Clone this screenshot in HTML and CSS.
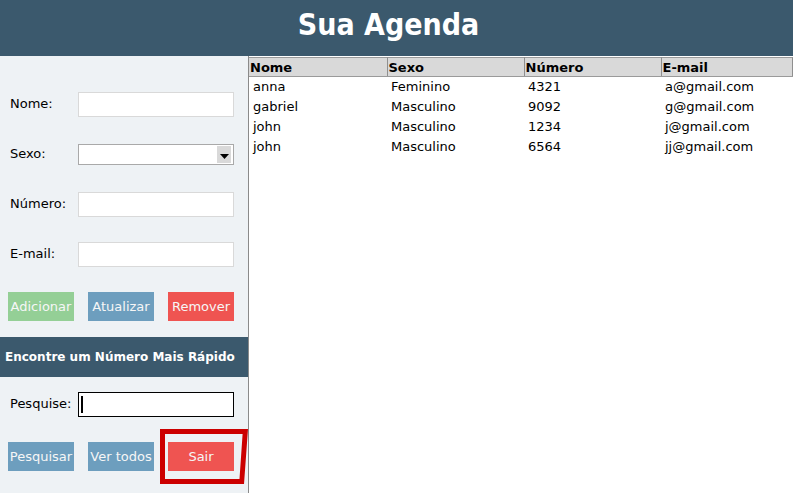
FILE: index.html
```html
<!DOCTYPE html>
<html lang="pt">
<head>
<meta charset="utf-8">
<title>Sua Agenda</title>
<link rel="stylesheet" href="styles.css">
</head>
<body>
<header class="topbar"><h1 class="title">Sua Agenda</h1></header>
<div class="main">
  <aside class="panel">
    <div class="form">
      <div class="row"><label class="lbl">Nome:</label><div class="field"></div></div>
      <div class="row"><label class="lbl">Sexo:</label><div class="select"><span class="arrow"><svg width="9" height="6" viewBox="0 0 9 6"><path d="M0 0H9L4.5 5Z" fill="#000"/></svg></span></div></div>
      <div class="row"><label class="lbl">Número:</label><div class="field"></div></div>
      <div class="row"><label class="lbl">E-mail:</label><div class="field"></div></div>
      <div class="btns">
        <button class="btn green">Adicionar</button>
        <button class="btn blue">Atualizar</button>
        <button class="btn red">Remover</button>
      </div>
    </div>
    <div class="section">Encontre um Número Mais Rápido</div>
    <div class="form search">
      <div class="row"><label class="lbl">Pesquise:</label><div class="field dark"><span class="caret"></span></div></div>
      <div class="btns">
        <button class="btn blue">Pesquisar</button>
        <button class="btn blue">Ver todos</button>
        <span class="sairwrap"><button class="btn red">Sair</button>
          <svg class="mark" width="92" height="60" viewBox="0 0 92 60"><path d="M2 2H90L86 57H2Z M7 7V52H81.5L84.6 7Z" fill="#cc0000" fill-rule="evenodd"/></svg>
        </span>
      </div>
    </div>
  </aside>
  <section class="tablearea">
    <table class="grid">
      <colgroup><col class="c1"><col class="c2"><col class="c3"><col></colgroup>
      <thead><tr><th>Nome</th><th>Sexo</th><th>Número</th><th>E-mail</th></tr></thead>
      <tbody>
        <tr><td>anna</td><td>Feminino</td><td>4321</td><td>a@gmail.com</td></tr>
        <tr><td>gabriel</td><td>Masculino</td><td>9092</td><td>g@gmail.com</td></tr>
        <tr><td>john</td><td>Masculino</td><td>1234</td><td>j@gmail.com</td></tr>
        <tr><td>john</td><td>Masculino</td><td>6564</td><td>jj@gmail.com</td></tr>
      </tbody>
    </table>
  </section>
</div>
</body>
</html>
```
FILE: styles.css
```css
* { box-sizing: border-box; }
html, body { margin: 0; padding: 0; }
body {
  width: 793px; height: 493px; overflow: hidden;
  font-family: "DejaVu Sans", sans-serif; font-size: 13px; color: #000;
  background: #eef2f5;
  display: flex; flex-direction: column;
}
.topbar {
  height: 56px; background: #3b596d;
  display: flex; align-items: center; justify-content: center;
}
.title {
  margin: 0; color: #fff; font-family: "DejaVu Sans Condensed", "DejaVu Sans", sans-serif;
  font-stretch: condensed; font-size: 30px; font-weight: bold; padding-bottom: 7px; padding-right: 16px;
}
.main { flex: 1; display: flex; }
.panel {
  width: 249px; border-right: 1px solid #8a8a8a; background: #eef2f5;
  display: flex; flex-direction: column;
}
.form { display: flex; flex-direction: column; gap: 25px; padding-top: 36px; }
.row { display: flex; align-items: center; height: 25px; }
.lbl { width: 78px; padding-left: 10px; padding-bottom: 3px; }
.field { width: 156px; height: 25px; background: #fff; border: 1px solid #d9d9d9; position: relative; }
.field.dark { border-color: #000; height: 25px; }
.caret { position: absolute; left: 2px; top: 3px; width: 2px; height: 17px; background: #000; }
.select {
  width: 156px; height: 21px; background: #fff; border: 1px solid #a9a9a9;
  display: flex; justify-content: flex-end; align-items: center; padding-right: 2px;
}
.arrow {
  width: 14px; height: 17px; background: #d9d9d9;
  display: flex; align-items: flex-end; justify-content: center; padding-bottom: 3px;
}
.arrow svg { display: block; }
.btns { display: flex; gap: 14px; padding-left: 8px; height: 29px; }
.btn {
  width: 66px; height: 29px; border: 0; padding: 0; margin: 0;
  font-family: "DejaVu Sans", sans-serif; font-size: 13px; color: #f6f6f6;
  white-space: nowrap; overflow: hidden;
}
.green { background: #94cf96; }
.blue { background: #6d9ebe; }
.red { background: #ef5451; }
.section {
  margin-top: 16px; height: 40px; background: #3b596d; color: #fff;
  font-weight: bold; font-size: 12px; display: flex; align-items: center; padding-left: 5px;
}
.search { padding-top: 15px; }
.sairwrap { position: relative; display: block; }
.mark { position: absolute; left: -10px; top: -15px; }
.tablearea { flex: 1; background: #fff; padding-top: 1px; }
.grid { border-collapse: collapse; width: 100%; table-layout: fixed; }
.c1 { width: 138px; }
.c2 { width: 137px; }
.c3 { width: 137px; }
.grid th {
  background: #d9d9d9; text-align: left; font-weight: bold; font-size: 13px;
  height: 19px; padding: 0 0 0 1px; line-height: 17px;
  border-left: 1px solid #f4f4f4; border-right: 1px solid #8f8f8f; border-bottom: 1px solid #9a9a9a;
  border-top: 1px solid #9a9a9a;
}
.grid th:first-child { border-left: 0; }
.grid td { height: 20px; padding: 0 0 0 4px; line-height: 20px; white-space: nowrap; }
```
